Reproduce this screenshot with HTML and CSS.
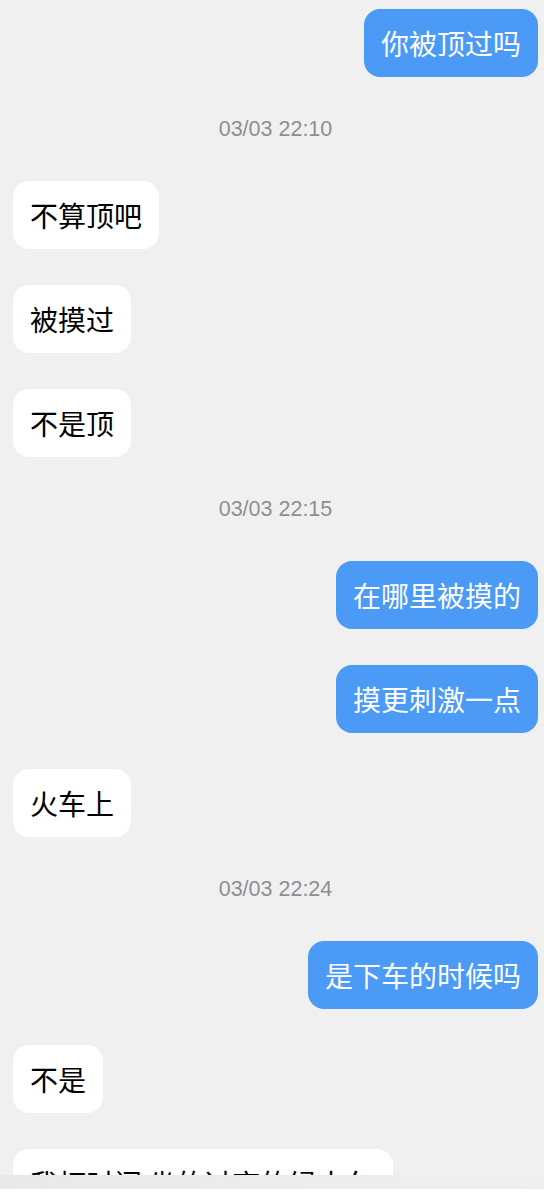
FILE: index.html
```html
<!DOCTYPE html>
<html lang="zh-CN">
<head>
<meta charset="UTF-8" />
<meta name="viewport" content="width=device-width, initial-scale=1" />
<title>聊天</title>
<link rel="stylesheet" href="styles.css">
</head>
<body>
  <div class="chat">
    <div class="messages">
      <div class="msg me"><div class="bubble">你被顶过吗</div></div>
      <div class="time">03/03 22:10</div>
      <div class="msg them"><div class="bubble">不算顶吧</div></div>
      <div class="msg them"><div class="bubble">被摸过</div></div>
      <div class="msg them"><div class="bubble">不是顶</div></div>
      <div class="time">03/03 22:15</div>
      <div class="msg me"><div class="bubble">在哪里被摸的</div></div>
      <div class="msg me"><div class="bubble">摸更刺激一点</div></div>
      <div class="msg them"><div class="bubble">火车上</div></div>
      <div class="time">03/03 22:24</div>
      <div class="msg me"><div class="bubble">是下车的时候吗</div></div>
      <div class="msg them"><div class="bubble">不是</div></div>
      <div class="msg them"><div class="bubble">我打时间 坐的过夜的绿皮车回去的，人很多很挤</div></div>
    </div>
    <div class="input-bar">
      <div class="input-edge"></div>
    </div>
  </div>
</body>
</html>
```

FILE: styles.css
```css
/* Reset and base styles */
* {
  box-sizing: border-box;
}
body {
  margin: 0;
  background: #f0f0f0;
  font-family: "Noto Sans CJK SC", "Noto Sans", sans-serif;
  color: #000;
}
.chat {
  height: 1200px;
  display: flex;
  flex-direction: column;
  overflow: hidden;
}
.messages {
  flex: 1;
  overflow: hidden;
  display: flex;
  flex-direction: column;
  gap: 36px;
  padding: 9px 6px 0 13px;
}
.msg {
  display: flex;
}
.msg.me {
  justify-content: flex-end;
}
.bubble {
  max-width: 380px;
  padding: 16px 17px;
  border-radius: 16px;
  font-size: 28px;
  line-height: 36px;
  background: #fff;
  flex-shrink: 0;
}
.msg.me .bubble {
  background: #4a9af6;
  color: #fff;
}
.time {
  height: 32px;
  line-height: 32px;
  text-align: center;
  font-family: "Liberation Sans", Arial, sans-serif;
  font-size: 21.5px;
  color: #8e8e93;
}
.input-bar {
  height: 25px;
  background: #fff;
}
.input-edge {
  height: 14px;
  background: linear-gradient(90deg, #e9e9e9, #efefef);
}
```
